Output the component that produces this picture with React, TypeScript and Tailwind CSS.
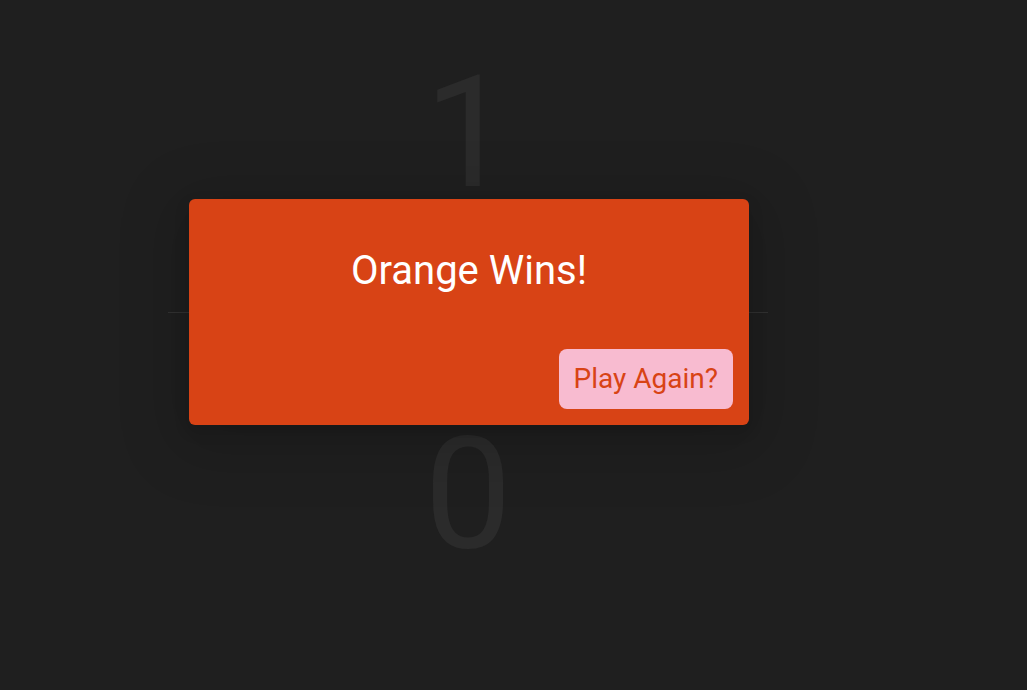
import React from 'react';

const App: React.FC = () => {
  return (
    <div
      className="relative w-full h-[690px] bg-[#1f1f1f] overflow-hidden"
      style={{ fontFamily: 'Roboto, "Noto Sans", sans-serif' }}
    >
      {/* Scoreboard */}
      <div className="flex flex-col items-center w-[600px] ml-[168px] pt-[55px] text-[#2b2b2b]">
        <div className="text-[156px] leading-none">1</div>
        <div className="w-full h-px bg-[#323232] mt-[101px] mb-[103px]" />
        <div className="text-[156px] leading-none">0</div>
      </div>

      {/* Winner dialog */}
      <div className="absolute left-[189px] top-[199px] w-[560px] h-[226px] rounded-[6px] bg-[#d84315] flex flex-col shadow-[0_12px_60px_16px_rgba(0,0,0,0.14),0_6px_16px_rgba(0,0,0,0.12)]">
        <div className="flex-1 flex justify-center pt-[52px] text-white text-[40px] leading-none">
          Orange Wins!
        </div>
        <div className="flex justify-end p-4">
          <button className="h-[60px] px-[15px] rounded-[8px] bg-[#f8bbd0] text-[#d84315] text-[28px] leading-none">
            Play Again?
          </button>
        </div>
      </div>
    </div>
  );
};

export default App;
